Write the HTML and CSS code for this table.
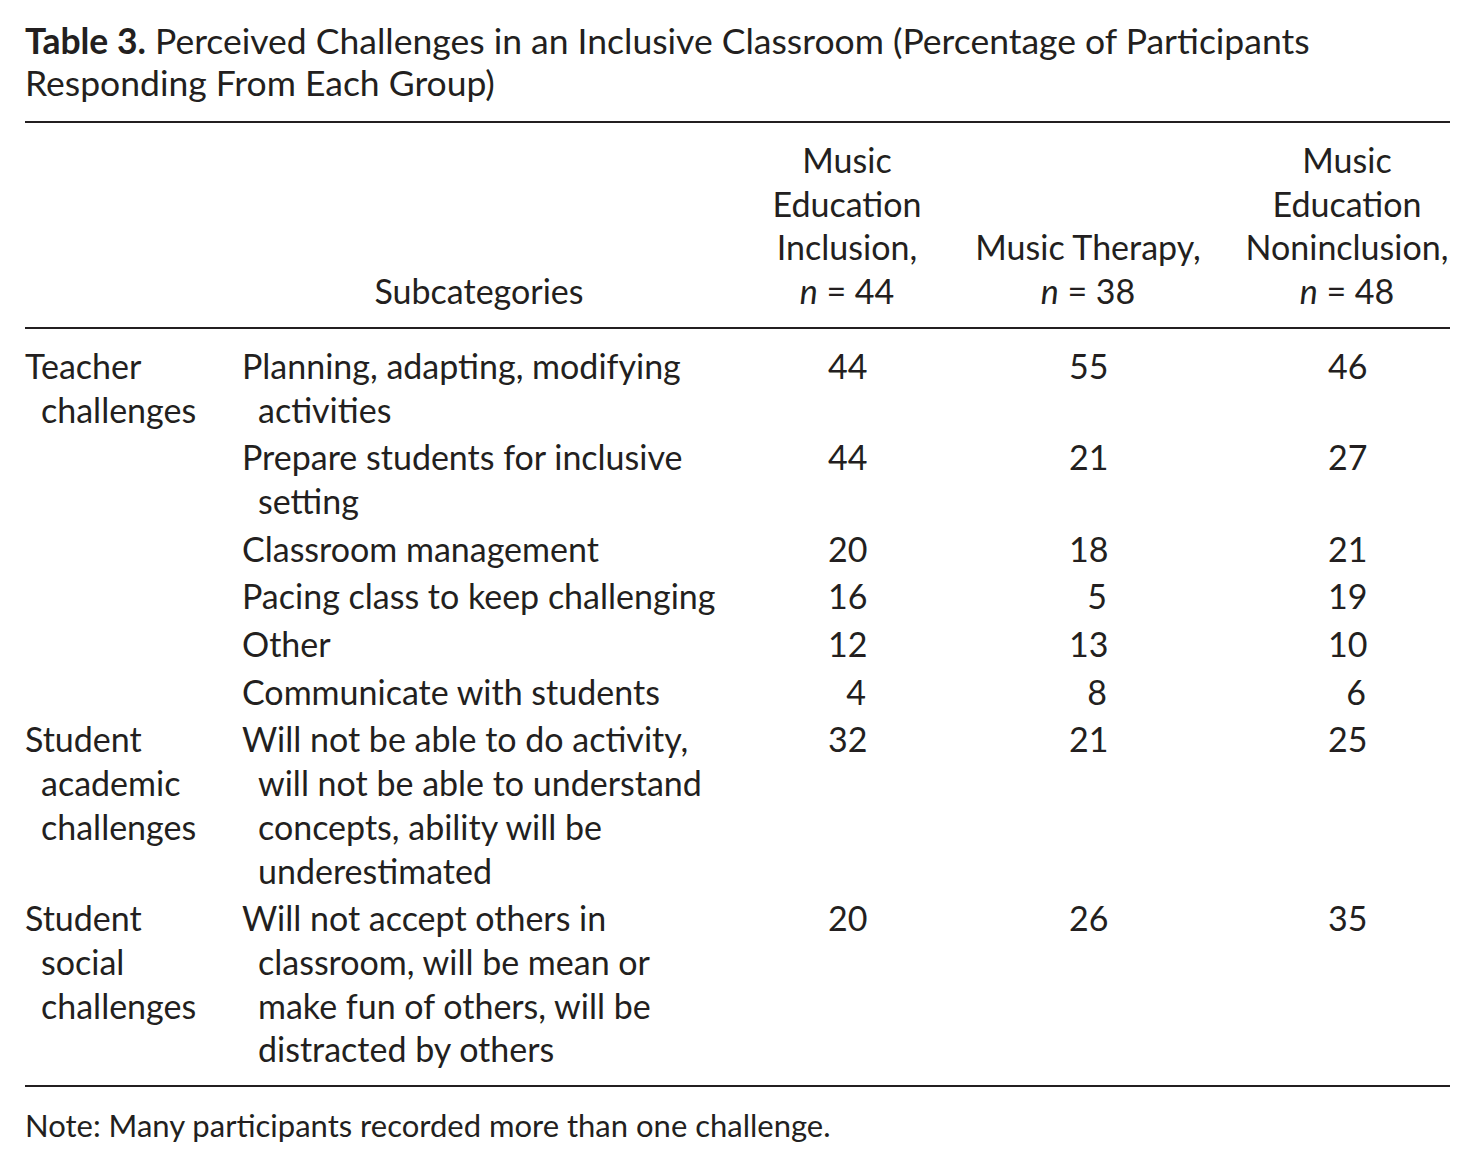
FILE: index.html
```html
<!DOCTYPE html>
<html lang="en">
<head>
<meta charset="utf-8">
<title>Table 3</title>
<link rel="stylesheet" href="styles.css">
</head>
<body>
<div class="page">
  <p class="caption"><b>Table 3.</b> Perceived Challenges in an Inclusive Classroom (Percentage of Participants<br>Responding From Each Group)</p>
  <table class="data">
    <colgroup>
      <col class="w1"><col class="w2"><col class="w3"><col class="w4"><col class="w5">
    </colgroup>
    <thead>
      <tr>
        <th class="cat"></th>
        <th class="sub">Subcategories</th>
        <th class="grp">Music<br>Education<br>Inclusion,<br><i>n</i> = 44</th>
        <th class="grp">Music Therapy,<br><i>n</i> = 38</th>
        <th class="grp">Music<br>Education<br>Noninclusion,<br><i>n</i> = 48</th>
      </tr>
    </thead>
    <tbody>
      <tr>
        <td class="cat">Teacher<br>challenges</td>
        <td class="sub">Planning, adapting, modifying<br>activities</td>
        <td class="num"><span class="n">44</span></td>
        <td class="num"><span class="n">55</span></td>
        <td class="num"><span class="n">46</span></td>
      </tr>
      <tr>
        <td class="cat"></td>
        <td class="sub">Prepare students for inclusive<br>setting</td>
        <td class="num"><span class="n">44</span></td>
        <td class="num"><span class="n">21</span></td>
        <td class="num"><span class="n">27</span></td>
      </tr>
      <tr>
        <td class="cat"></td>
        <td class="sub">Classroom management</td>
        <td class="num"><span class="n">20</span></td>
        <td class="num"><span class="n">18</span></td>
        <td class="num"><span class="n">21</span></td>
      </tr>
      <tr>
        <td class="cat"></td>
        <td class="sub">Pacing class to keep challenging</td>
        <td class="num"><span class="n">16</span></td>
        <td class="num"><span class="n">5</span></td>
        <td class="num"><span class="n">19</span></td>
      </tr>
      <tr>
        <td class="cat"></td>
        <td class="sub">Other</td>
        <td class="num"><span class="n">12</span></td>
        <td class="num"><span class="n">13</span></td>
        <td class="num"><span class="n">10</span></td>
      </tr>
      <tr>
        <td class="cat"></td>
        <td class="sub">Communicate with students</td>
        <td class="num"><span class="n">4</span></td>
        <td class="num"><span class="n">8</span></td>
        <td class="num"><span class="n">6</span></td>
      </tr>
      <tr>
        <td class="cat">Student<br>academic<br>challenges</td>
        <td class="sub">Will not be able to do activity,<br>will not be able to understand<br>concepts, ability will be<br>underestimated</td>
        <td class="num"><span class="n">32</span></td>
        <td class="num"><span class="n">21</span></td>
        <td class="num"><span class="n">25</span></td>
      </tr>
      <tr>
        <td class="cat">Student<br>social<br>challenges</td>
        <td class="sub">Will not accept others in<br>classroom, will be mean or<br>make fun of others, will be<br>distracted by others</td>
        <td class="num"><span class="n">20</span></td>
        <td class="num"><span class="n">26</span></td>
        <td class="num"><span class="n">35</span></td>
      </tr>
    </tbody>
  </table>
  <p class="note">Note: Many participants recorded more than one challenge.</p>
</div>
</body>
</html>
```

FILE: styles.css
```css
html, body {
  margin: 0;
  padding: 0;
  background: #ffffff;
}

body {
  font-family: "Lato", "Open Sans", sans-serif;
  color: #231f20;
}

.page {
  padding: 20px 27px 0 25px;
  width: 1425px;
}

.caption {
  margin: 0;
  font-size: 35.5px;
  line-height: 42px;
  white-space: nowrap;
}

.caption b {
  font-weight: 700;
}

.data {
  margin-top: 17px;
  width: 1425px;
  table-layout: fixed;
  border-collapse: collapse;
  border-top: 2px solid #231f20;
  border-bottom: 2px solid #231f20;
  font-size: 34px;
  line-height: 43.7px;
}

.w1 { width: 217px; }
.w2 { width: 520px; }
.w3 { width: 170px; }
.w4 { width: 312px; }
.w5 { width: 206px; }

.data th {
  font-weight: 400;
  vertical-align: bottom;
  padding: 15px 0 14px 0;
  white-space: nowrap;
  border-bottom: 2px solid #231f20;
}

.data th.sub {
  text-align: center;
  padding-right: 46px;
}

.data th.grp {
  text-align: center;
}

.data td {
  vertical-align: top;
  padding: 0 0 4px 0;
  white-space: nowrap;
}

.data tbody tr:first-child td {
  padding-top: 15px;
}

.data tbody tr:last-child td {
  padding-bottom: 14px;
}

.data td.cat,
.data td.sub {
  text-align: left;
  padding-left: 16px;
  text-indent: -16px;
}

.data td.num {
  text-align: center;
}

.n {
  display: inline-block;
  width: 38px;
  text-align: right;
}

.note {
  margin: 17px 0 0 0;
  font-size: 31px;
  line-height: 43.7px;
}
```
